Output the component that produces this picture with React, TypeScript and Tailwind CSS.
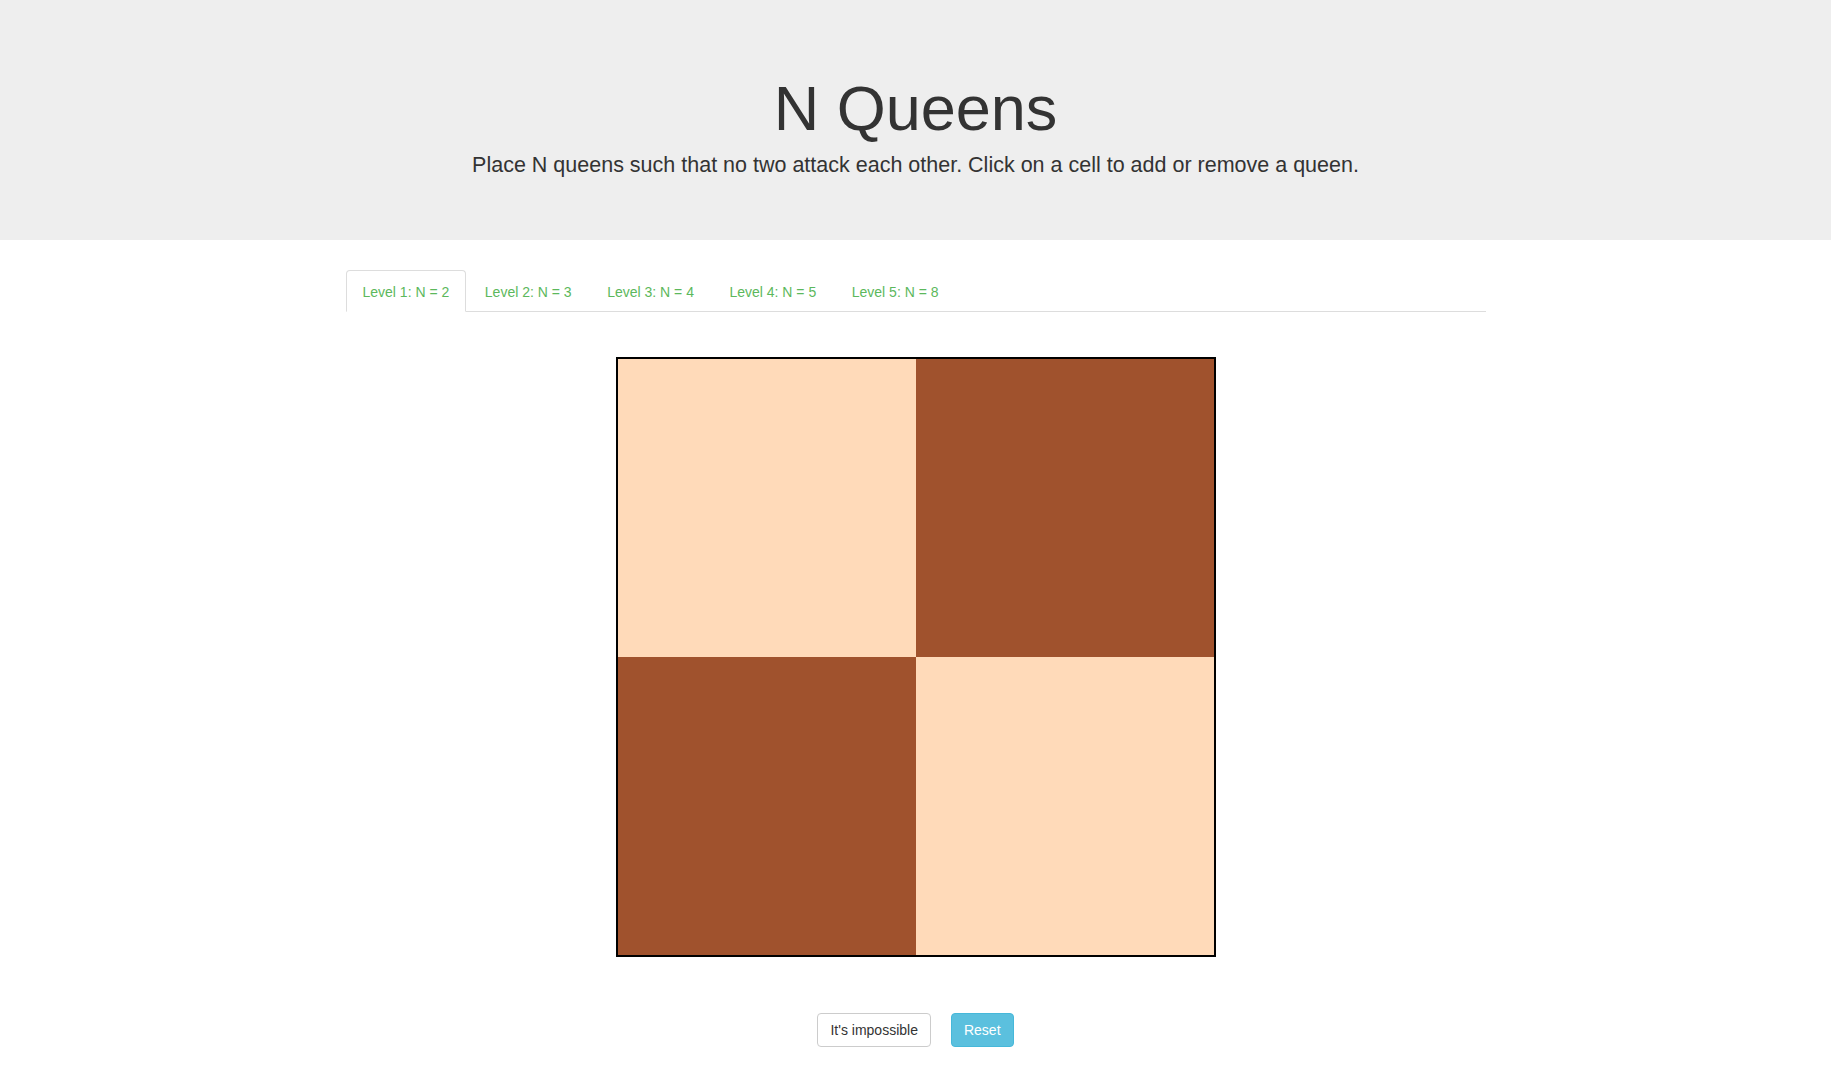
import React, { useState } from "react";

const levels = [2, 3, 4, 5, 8];

export default function App() {
  const [active, setActive] = useState(0);
  const [queens, setQueens] = useState<Set<string>>(new Set());
  const n = levels[active];
  const cellSize = 596 / n;

  const toggle = (r: number, c: number) => {
    const key = `${r}-${c}`;
    const next = new Set(queens);
    if (next.has(key)) next.delete(key);
    else next.add(key);
    setQueens(next);
  };

  return (
    <div
      className="min-h-screen bg-white text-[#333] text-[14px] leading-[1.42857]"
      style={{ fontFamily: '"Liberation Sans", Arial, Helvetica, sans-serif' }}
    >
      <div className="bg-[#eeeeee] h-[240px] pt-[48px] mb-[30px] text-center">
        <div className="mx-auto w-[1170px] px-[15px]">
          <h1 className="text-[63px] leading-[1.1] mt-[26px] mb-[7px] font-normal">N Queens</h1>
          <p className="text-[21.5px] leading-[30px] font-normal">
            Place N queens such that no two attack each other. Click on a cell to add or remove a queen.
          </p>
        </div>
      </div>
      <div className="mx-auto w-[1170px] px-[15px]">
        <ul className="flex border-b border-[#dddddd]">
          {levels.map((lv, i) => (
            <li key={lv} className="-mb-px mr-[2px]">
              <button
                onClick={() => {
                  setActive(i);
                  setQueens(new Set());
                }}
                className={
                  "block pl-[16px] pr-[15.5px] pt-[11px] pb-[9px] leading-[20px] rounded-t-[4px] border text-[#5cb85c] " +
                  (i === active
                    ? "border-[#dddddd] border-b-transparent bg-white"
                    : "border-transparent")
                }
              >
                Level {i + 1}: N = {lv}
              </button>
            </li>
          ))}
        </ul>
        <div className="mt-[45px] mx-auto w-[600px] h-[600px] border-2 border-black flex flex-col">
          {Array.from({ length: n }).map((_, r) => (
            <div key={r} className="flex" style={{ height: cellSize }}>
              {Array.from({ length: n }).map((_, c) => {
                const dark = (r + c) % 2 === 1;
                const has = queens.has(`${r}-${c}`);
                return (
                  <div
                    key={c}
                    onClick={() => toggle(r, c)}
                    className={
                      "flex items-center justify-center cursor-pointer " +
                      (dark ? "bg-[#a0522d]" : "bg-[#ffdab9]")
                    }
                    style={{ width: cellSize, height: cellSize, fontSize: cellSize * 0.6 }}
                  >
                    {has ? "♛" : ""}
                  </div>
                );
              })}
            </div>
          ))}
        </div>
        <div className="mt-[56px] flex justify-center gap-[20px]">
          <button className="px-[12px] py-[6px] leading-[20px] text-[14px] text-[#333] bg-white border border-[#cccccc] rounded-[4px]">
            It's impossible
          </button>
          <button
            onClick={() => setQueens(new Set())}
            className="px-[12px] py-[6px] leading-[20px] text-[14px] text-white bg-[#5bc0de] border border-[#46b8da] rounded-[4px]"
          >
            Reset
          </button>
        </div>
      </div>
    </div>
  );
}
